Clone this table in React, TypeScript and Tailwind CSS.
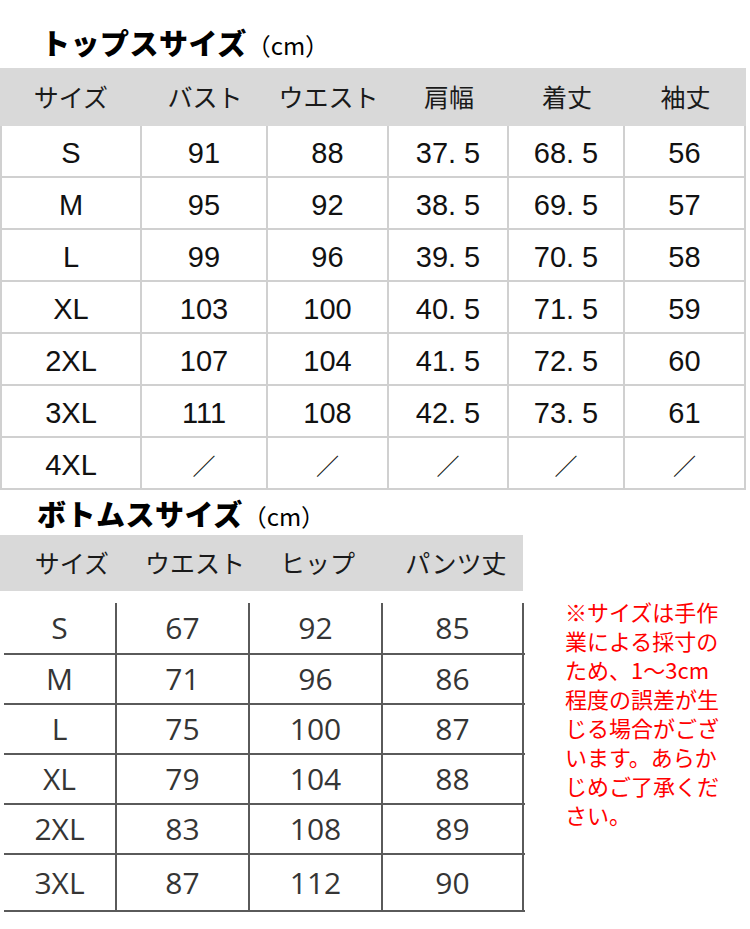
import React from "react";

const tops: string[][] = [
  ["S", "91", "88", "37. 5", "68. 5", "56"],
  ["M", "95", "92", "38. 5", "69. 5", "57"],
  ["L", "99", "96", "39. 5", "70. 5", "58"],
  ["XL", "103", "100", "40. 5", "71. 5", "59"],
  ["2XL", "107", "104", "41. 5", "72. 5", "60"],
  ["3XL", "111", "108", "42. 5", "73. 5", "61"],
  ["4XL", "／", "／", "／", "／", "／"],
];

const topHead = ["サイズ", "バスト", "ウエスト", "肩幅", "着丈", "袖丈"];

const bottoms: string[][] = [
  ["S", "67", "92", "85"],
  ["M", "71", "96", "86"],
  ["L", "75", "100", "87"],
  ["XL", "79", "104", "88"],
  ["2XL", "83", "108", "89"],
  ["3XL", "87", "112", "90"],
];

const bottomHead = ["サイズ", "ウエスト", "ヒップ", "パンツ丈"];

const rowH = ["h-[64px] pt-[12px]", "h-[50px]", "h-[50px]", "h-[50px]", "h-[50px]", "h-[57px]"];

const noteLines = [
  "※サイズは手作",
  "業による採寸の",
  "ため、1～3cm",
  "程度の誤差が生",
  "じる場合がござ",
  "います。あらか",
  "じめご了承くだ",
  "さい。",
];

function Title({ text }: { text: string }) {
  return (
    <div className="flex items-baseline">
      <span className="font-['Noto_Sans_CJK_JP',sans-serif] font-black text-[29px] leading-none tracking-[0.5px] text-black">
        {text}
      </span>
      <span className="font-['Noto_Sans_CJK_JP',sans-serif] font-normal text-[24px] leading-none text-black">
        （cm）
      </span>
    </div>
  );
}

export default function App() {
  return (
    <div className="w-[750px] h-[929px] bg-white overflow-hidden">
      {/* Tops title */}
      <div className="h-[68px] pt-[16px] pl-[41px] flex items-center">
        <Title text="トップスサイズ" />
      </div>

      {/* Tops table */}
      <div className="w-[746px]">
        <div className="h-[58px] bg-[#d9d9d9] grid grid-cols-[142px_126px_121px_120px_116px_121px] font-['Noto_Sans_CJK_JP',sans-serif] text-[25px] text-[#1a1a1a]">
          {topHead.map((h) => (
            <div key={h} className="flex items-center justify-center">
              {h}
            </div>
          ))}
        </div>
        <div className="border-l-2 border-[#d0d0d0]">
          {tops.map((row, i) => (
            <div
              key={i}
              className="h-[52px] grid grid-cols-[140px_126px_121px_120px_116px_121px] border-b-2 border-[#d0d0d0]"
            >
              {row.map((c, j) => (
                <div
                  key={j}
                  className={`border-r-2 border-[#d0d0d0] flex items-center justify-center pt-[4px] leading-none text-[#111] ${
                    c === "／"
                      ? "font-['Noto_Sans_CJK_JP',sans-serif] text-[23px]"
                      : "font-['Liberation_Sans','Noto_Sans_CJK_JP',sans-serif] text-[29px]"
                  }`}
                >
                  {c}
                </div>
              ))}
            </div>
          ))}
        </div>
      </div>

      {/* Bottoms title */}
      <div className="h-[45px] pl-[37px] flex items-center pt-[2px]">
        <Title text="ボトムスサイズ" />
      </div>

      {/* Bottoms table + note */}
      <div className="flex">
        <div className="w-[525px]">
          <div className="w-[523px] h-[56px] bg-[#d9d9d9] grid grid-cols-[144px_102px_143px_134px] font-['Noto_Sans_CJK_JP',sans-serif] text-[25px] text-[#1a1a1a]">
            {bottomHead.map((h) => (
              <div key={h} className="flex items-center justify-center">
                {h}
              </div>
            ))}
          </div>
          <div className="ml-[4px]">
            {bottoms.map((row, i) => (
              <div
                key={i}
                className={`${rowH[i]} grid grid-cols-[113px_133px_133px_141px] border-b-2 border-[#5a5a5a]`}
              >
                {row.map((c, j) => (
                  <div
                    key={j}
                    className="border-r-2 border-[#5a5a5a] flex items-center justify-center font-['Open_Sans',sans-serif] text-[30px] leading-none text-[#353535]"
                  >
                    {c}
                  </div>
                ))}
              </div>
            ))}
          </div>
        </div>
        <div className="pl-[40px] pt-[62px] font-['Noto_Sans_CJK_JP',sans-serif] text-[22px] leading-[29px] text-[#ff0000]">
          {noteLines.map((l) => (
            <div key={l} className="whitespace-nowrap">
              {l}
            </div>
          ))}
        </div>
      </div>
    </div>
  );
}
